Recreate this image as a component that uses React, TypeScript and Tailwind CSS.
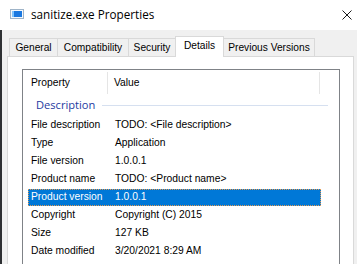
import React from "react";

const rows: { name: string; value: string; selected?: boolean }[] = [
  { name: "File description", value: "TODO: <File description>" },
  { name: "Type", value: "Application" },
  { name: "File version", value: "1.0.0.1" },
  { name: "Product name", value: "TODO: <Product name>" },
  { name: "Product version", value: "1.0.0.1", selected: true },
  { name: "Copyright", value: "Copyright (C) 2015" },
  { name: "Size", value: "127 KB" },
  { name: "Date modified", value: "3/20/2021 8:29 AM" },
];

const tabs = [
  { label: "General", w: "w-[48px]" },
  { label: "Compatibility", w: "w-[71px]" },
  { label: "Security", w: "w-[47px]" },
];

function WindowIcon() {
  return (
    <svg width="14" height="10" viewBox="0 0 14 10">
      <rect x="0.5" y="0.5" width="13" height="9" fill="#f4f8fc" stroke="#9fb4c8" />
      <rect x="2" y="2" width="10" height="6" fill="#1a78e0" />
      <rect x="2" y="2" width="2" height="6" fill="#7cc4ff" />
    </svg>
  );
}

function CloseIcon() {
  return (
    <svg width="10" height="10" viewBox="0 0 10 10">
      <path d="M0.5 0.5L9.5 9.5M9.5 0.5L0.5 9.5" stroke="#1a1a1a" strokeWidth="1" />
    </svg>
  );
}

export default function App() {
  return (
    <div className="w-[357px] h-[264px] overflow-hidden bg-white flex flex-col font-['Liberation_Sans',Arial,sans-serif] text-black">
      {/* title bar */}
      <div className="h-[30px] flex items-center shrink-0">
        <div className="ml-[10px] mt-[-2px] flex">
          <WindowIcon />
        </div>
        <span className="ml-[7px] font-['Open_Sans',sans-serif] text-[11.7px] leading-none">
          sanitize.exe Properties
        </span>
        <div className="ml-auto mr-[5px] flex">
          <CloseIcon />
        </div>
      </div>

      <div className="flex flex-1 min-h-0">
        <div className="w-[2px] bg-[#2e3033]" />
        <div className="flex-1 bg-[#f0f0f0] flex flex-col">
          {/* tabs */}
          <div className="h-[26px] flex items-end pl-[7px] shrink-0 text-[10.2px]">
            {tabs.map((t) => (
              <div
                key={t.label}
                className={`${t.w} h-[18px] border-l border-t border-[#d9d9d9] flex items-center justify-center`}
              >
                {t.label}
              </div>
            ))}
            <div className="relative z-10 w-[49px] h-[21px] mb-[-1px] bg-white border-l border-t border-r border-[#d9d9d9] flex items-center justify-center pb-[2px]">
              Details
            </div>
            <div className="w-[91px] h-[18px] border-t border-r border-[#d9d9d9] flex items-center justify-center">
              Previous Versions
            </div>
          </div>

          {/* panel */}
          <div className="ml-[5px] w-[347px] flex-1 bg-white border border-[#d9d9d9] pt-[12px] pl-[14px]">
            <div className="w-[318px] h-[220px] border border-[#7f8287] text-[10.3px]">
              {/* header */}
              <div className="h-[26px] flex">
                <div className="w-[85px] flex items-center pl-[8px] my-[2px] border-r border-[#e5e5e5]">
                  Property
                </div>
                <div className="w-[212px] flex items-center pl-[6px] my-[2px] border-r border-[#e5e5e5]">
                  Value
                </div>
              </div>

              {/* group */}
              <div className="h-[20px] flex items-center pl-[13px] pb-[2px] pr-[11px]">
                <span className="font-['Open_Sans',sans-serif] text-[11.1px] text-[#1e3a9f] leading-none">
                  Description
                </span>
                <div className="flex-1 ml-[7px] h-px bg-[#d6e0f0]" />
              </div>

              {/* rows */}
              {rows.map((r) => (
                <div key={r.name} className="h-[18px] flex items-center">
                  <div
                    className={`ml-[5px] w-[293px] h-[17px] flex items-center ${
                      r.selected
                        ? "bg-[#0078d7] text-white border border-dotted border-[#e39a52]"
                        : "border border-transparent"
                    }`}
                  >
                    <div className="w-[79px] pl-[2px] whitespace-nowrap">{r.name}</div>
                    <div className="pl-[7px] whitespace-nowrap">{r.value}</div>
                  </div>
                </div>
              ))}
            </div>
          </div>
        </div>
      </div>
    </div>
  );
}
